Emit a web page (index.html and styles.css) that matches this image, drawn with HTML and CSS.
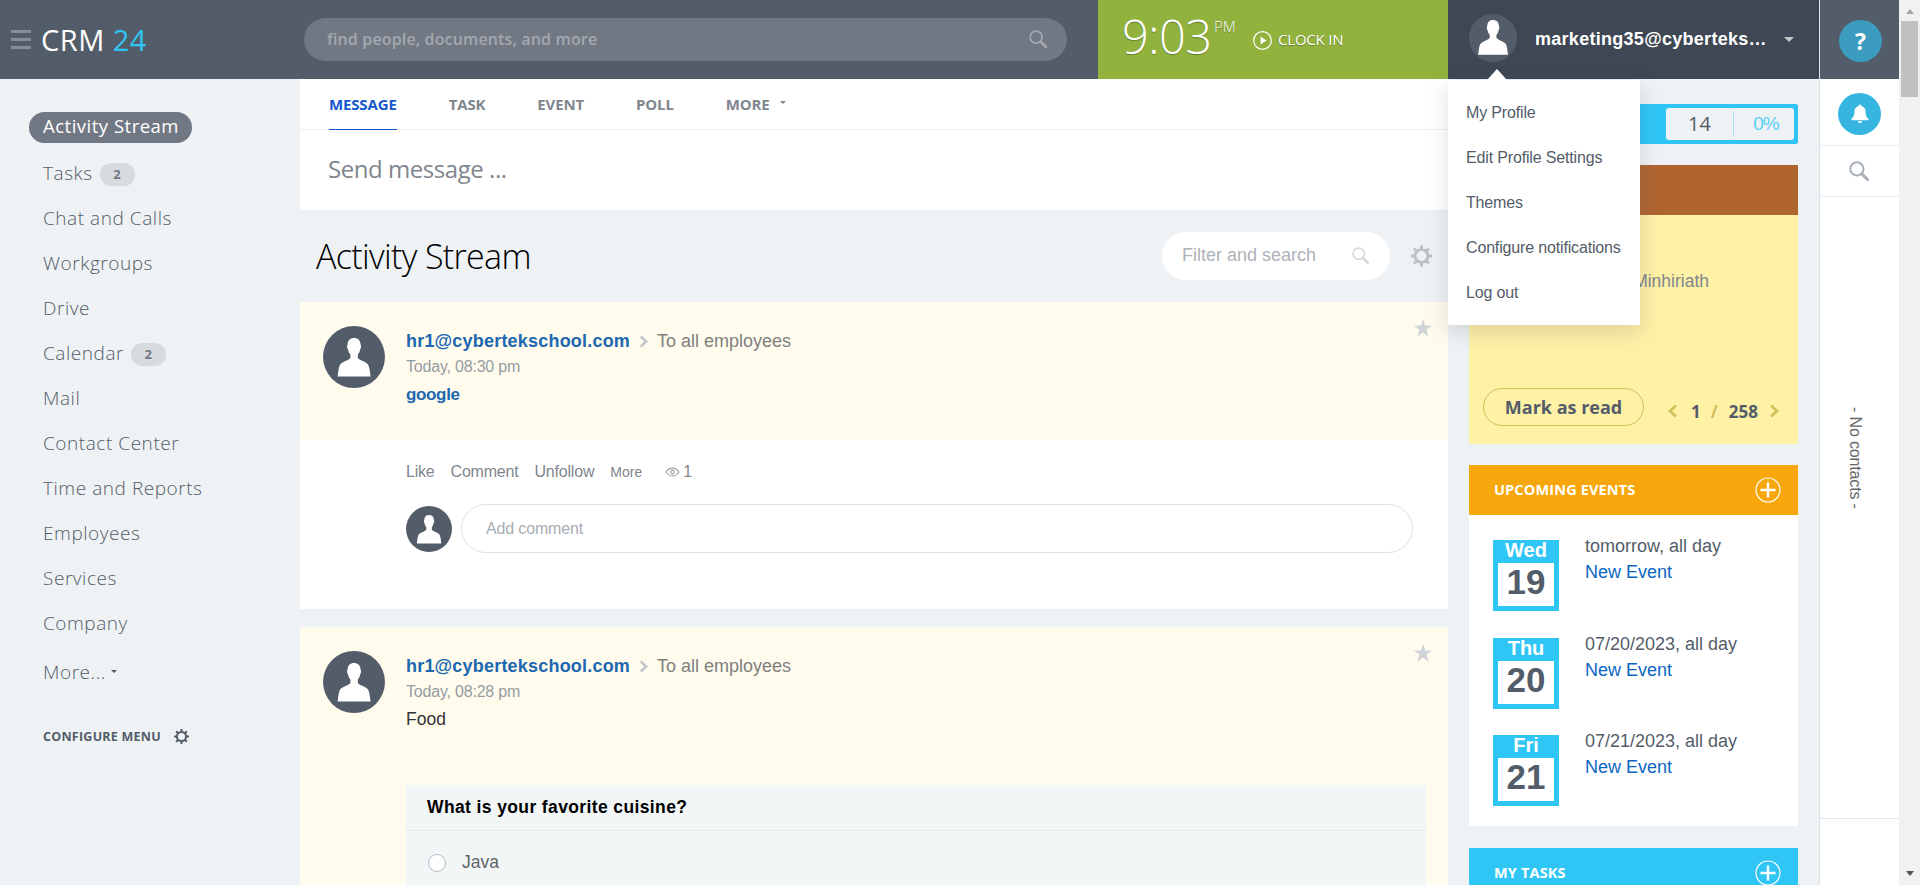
FILE: index.html
```html
<!DOCTYPE html>
<html lang="en">
<head>
<meta charset="utf-8">
<title>CRM 24</title>
<link rel="stylesheet" href="styles.css">
</head>
<body>
<svg class="defs" width="0" height="0">
  <symbol id="person" viewBox="0 0 62 62"><path d="M31 12c-4 0-6.300 2.500-6.300 6.500-1 .5-.6 4 .3 4.800.5 2.700 1.300 4 2.400 5.200v3.200c-1 2.800-8.400 3.500-10.600 7.200-1.200 2.600-1.600 7-2.200 11.600h33c-.6-4.600-1-9-2.300-11.600-2-3.700-9.500-4.400-10.500-7.200v-3.200c1.100-1.200 1.900-2.500 2.400-5.200.9-.8 1.200-4.300.3-4.800C37.500 14.500 35 12 31 12z" fill="#fff"/></symbol>
  <symbol id="lens" viewBox="0 0 20 20"><circle cx="7.500" cy="7.500" r="6.300" fill="none" stroke="currentColor" stroke-width="1.900"/><path d="M12 12l6.500 6.500" stroke="currentColor" stroke-width="2.800"/></symbol>
  <symbol id="gear" viewBox="0 0 22 22"><circle cx="11" cy="11" r="6.700" fill="none" stroke="currentColor" stroke-width="3"/><path d="M11 0v4M11 18v4M0 11h4M18 11h4M3.200 3.200l3 3M15.800 15.800l3 3M3.200 18.800l3-3M15.800 6.200l3-3" stroke="currentColor" stroke-width="3"/></symbol>
  <symbol id="star" viewBox="0 0 18 18"><path d="M9 0l2.200 6.600H18l-5.500 4.200 2.100 6.700L9 13.400l-5.600 4.100 2.100-6.700L0 6.600h6.800z" fill="currentColor"/></symbol>
  <symbol id="plus" viewBox="0 0 26 26"><circle cx="13" cy="13" r="12" fill="none" stroke="#fff" stroke-width="1.200"/><path d="M13 5.500v15M5.500 13h15" stroke="#fff" stroke-width="2.400"/></symbol>
  <symbol id="chev" viewBox="0 0 10 14"><path d="M2 1.500L8 7l-6 5.500" fill="none" stroke="currentColor" stroke-width="2.800"/></symbol>
</svg>
<div class="page">
  <div class="app">
    <header class="header">
      <div class="brand">
        <div class="burger"><i></i><i></i><i></i></div>
        <div class="logo">CRM <b>24</b></div>
      </div>
      <div class="search"><span>find people, documents, and more</span><svg class="search-icon"><use href="#lens"/></svg></div>
      <div class="clock">
        <span class="time">9:03</span><span class="pm">PM</span>
        <svg class="play" viewBox="0 0 19 19"><circle cx="9.500" cy="9.500" r="8.800" fill="none" stroke="#fff" stroke-width="1.200"/><path d="M7.500 5.500v8l6-4z" fill="#fff"/></svg>
        <span class="clock-in">CLOCK IN</span>
      </div>
      <div class="user">
        <svg class="user-pic" viewBox="0 0 62 62"><use href="#person" width="62" height="62" transform="translate(-5.300 -6.300) scale(1.170)"/></svg>
        <span class="user-name">marketing35@cyberteks…</span>
        <i class="caret"></i>
        <div class="menu">
          <a>My Profile</a><a>Edit Profile Settings</a><a>Themes</a><a>Configure notifications</a><a>Log out</a>
        </div>
      </div>
    </header>
    <div class="body">
      <nav class="nav">
        <a class="item current"><span>Activity Stream</span></a>
        <a class="item">Tasks<em>2</em></a>
        <a class="item">Chat and Calls</a>
        <a class="item">Workgroups</a>
        <a class="item">Drive</a>
        <a class="item">Calendar<em>2</em></a>
        <a class="item">Mail</a>
        <a class="item">Contact Center</a>
        <a class="item">Time and Reports</a>
        <a class="item">Employees</a>
        <a class="item">Services</a>
        <a class="item">Company</a>
        <a class="item more">More...<i class="tiny-caret"></i></a>
        <a class="configure">CONFIGURE MENU<svg><use href="#gear"/></svg></a>
      </nav>
      <main class="main">
        <section class="composer">
          <div class="tabs"><a class="active">MESSAGE</a><a>TASK</a><a>EVENT</a><a>POLL</a><a>MORE<i class="tiny-caret"></i></a></div>
          <div class="send">Send message ...</div>
        </section>
        <div class="title-row">
          <h1>Activity Stream</h1>
          <div class="filter"><span>Filter and search</span><svg><use href="#lens"/></svg></div>
          <svg class="title-gear"><use href="#gear"/></svg>
        </div>
        <article class="post first">
          <div class="post-head">
            <svg class="avatar"><use href="#person"/></svg>
            <div class="post-info">
              <div class="who"><b>hr1@cybertekschool.com</b><svg><use href="#chev"/></svg><span>To all employees</span></div>
              <div class="when">Today, 08:30 pm</div>
              <div class="text link">google</div>
            </div>
            <svg class="star"><use href="#star"/></svg>
          </div>
          <div class="actions"><a>Like</a><a>Comment</a><a>Unfollow</a><a class="small">More</a><span class="views"><svg viewBox="0 0 16 10"><path d="M1 5c3.500-5.500 10.500-5.500 14 0-3.500 5.500-10.500 5.500-14 0z" fill="none" stroke="#a0a5ac" stroke-width="1.200"/><circle cx="8" cy="5" r="2" fill="none" stroke="#a0a5ac" stroke-width="1.200"/></svg>1</span></div>
          <div class="comment"><svg class="avatar mini"><use href="#person"/></svg><div class="input">Add comment</div></div>
        </article>
        <article class="post second">
          <div class="post-head">
            <svg class="avatar"><use href="#person"/></svg>
            <div class="post-info">
              <div class="who"><b>hr1@cybertekschool.com</b><svg><use href="#chev"/></svg><span>To all employees</span></div>
              <div class="when">Today, 08:28 pm</div>
              <div class="text">Food</div>
            </div>
            <svg class="star"><use href="#star"/></svg>
          </div>
          <div class="poll">
            <div class="question">What is your favorite cuisine?</div>
            <div class="option"><i></i>Java</div>
          </div>
        </article>
      </main>
      <aside class="side">
        <div class="pulse"><div class="pulse-box"><span>14</span><span class="pct">0%</span></div></div>
        <section class="notice">
          <div class="notice-head"></div>
          <div class="notice-body">
            <div class="notice-text">Minhiriath</div>
            <div class="notice-foot"><a class="read">Mark as read</a><div class="pager"><svg class="flip"><use href="#chev"/></svg><b>1</b><em>/</em><b>258</b><svg><use href="#chev"/></svg></div></div>
          </div>
        </section>
        <section class="events">
          <div class="widget-head">UPCOMING EVENTS<svg><use href="#plus"/></svg></div>
          <div class="events-body">
            <div class="event"><div class="date"><b>Wed</b><span>19</span></div><div class="what"><span>tomorrow, all day</span><a>New Event</a></div></div>
            <div class="event"><div class="date"><b>Thu</b><span>20</span></div><div class="what"><span>07/20/2023, all day</span><a>New Event</a></div></div>
            <div class="event"><div class="date"><b>Fri</b><span>21</span></div><div class="what"><span>07/21/2023, all day</span><a>New Event</a></div></div>
          </div>
        </section>
        <section class="tasks"><div class="widget-head">MY TASKS<svg><use href="#plus"/></svg></div></section>
      </aside>
    </div>
  </div>
  <aside class="rail">
    <div class="help"><span>?</span></div>
    <div class="bell"><span><svg viewBox="0 0 20 22"><path d="M10 0c-1.200 0-1.800.8-1.800 1.700C5 2.500 3.800 5 3.800 8c0 4.500-1.300 6-3.300 8v1.500h19V16c-2-2-3.300-3.500-3.300-8 0-3-1.200-5.500-4.400-6.300C11.800.8 11.200 0 10 0zM7.500 18.500c.3 1.500 1.300 2 2.500 2s2.200-.5 2.500-2z" fill="#fff"/></svg></span></div>
    <div class="find"><svg><use href="#lens"/></svg></div>
    <div class="contacts"><span>- No contacts -</span></div>
    <div class="rail-end"></div>
  </aside>
  <div class="scrollbar"><i class="up"></i><i class="thumb"></i><i class="down"></i></div>
</div>
</body>
</html>
```
FILE: styles.css
```css
* { box-sizing: border-box; }
body { margin: 0; font-family: "Liberation Sans", Arial, sans-serif; background: #eef2f4; overflow: hidden; }
em, i { font-style: normal; }
svg { display: block; flex: none; }
.defs { position: absolute; }
.page { display: flex; width: 1920px; height: 885px; overflow: hidden; }
.app { width: 1819px; display: flex; flex-direction: column; }

/* Header */
.header { height: 79px; flex: none; display: flex; background: #535c69; }
.brand { width: 304px; display: flex; align-items: center; padding-left: 11px; }
.burger { width: 20px; display: flex; flex-direction: column; gap: 5px; margin-right: 10px; }
.burger i { height: 3px; background: #868d95; }
.logo { font: 500 29px/38px "Open Sans", sans-serif; color: #fff; padding-top: 1px; letter-spacing: .5px; }
.logo b { font-weight: 500; color: #2fc6f6; }
.search { width: 763px; height: 43px; margin: 18px 31px 0 0; border-radius: 22px; background: #717884; display: flex; justify-content: space-between; align-items: center; padding: 0 19px 0 23px; color: #a3a8ae; font: 600 16px/20px "Open Sans", sans-serif; letter-spacing: .15px; }
.search span { padding-bottom: 2px; }
.search-icon { width: 19px; height: 19px; }
.clock { width: 350px; background: #91b33d; color: #fff; display: flex; align-items: flex-start; padding-left: 24px; font-family: "Open Sans", sans-serif; text-shadow: 0 1px 1px rgba(0,0,0,.3); }
.time { font-size: 47px; line-height: 60px; font-weight: 300; padding-top: 6px; width: 92px; letter-spacing: -.500px; }
.pm { font-size: 15px; line-height: 20px; font-weight: 300; margin-top: 16px; width: 38px; }
.play { width: 19px; height: 19px; margin: 31px 6px 0 1px; }
.clock-in { font-size: 15px; line-height: 20px; margin-top: 29px; letter-spacing: -.2px; }
.user { width: 371px; background: #3e4753; position: relative; display: flex; align-items: center; padding-left: 21px; }
.user-pic { width: 48px; height: 48px; border-radius: 50%; background: #535c69; margin-bottom: 4px; }
.user-name { color: #fff; font-weight: 700; font-size: 18px; letter-spacing: .28px; margin-left: 18px; width: 235px; white-space: nowrap; }
.caret { border: 5px solid transparent; border-top-color: #c3c7cb; border-bottom: 0; margin-left: 14px; }
.menu { position: absolute; left: 0; top: 80px; width: 192px; height: 245px; padding: 10px 18px; background: #fff; box-shadow: 0 7px 21px rgba(83,92,105,.2); z-index: 5; }
.menu::before { content: ""; position: absolute; left: 39px; top: -11px; border: 10px solid transparent; border-bottom: 11px solid #fff; border-top: 0; }
.menu a { display: block; height: 45px; line-height: 45px; font-size: 16px; letter-spacing: -.16px; color: #535c69; white-space: nowrap; }

/* Left navigation */
.body { flex: 1; display: flex; min-height: 0; }
.nav { width: 300px; padding: 26px 0 0 29px; font-family: "Open Sans", sans-serif; }
.item { display: flex; align-items: center; height: 45px; padding-left: 14px; font-size: 19px; font-weight: 300; letter-spacing: .55px; color: #535c69; }
.item.current { padding-left: 0; height: 45px; }
.item.current span { height: 31px; line-height: 27px; padding: 0 13px 0 14px; border-radius: 16px; background: #717884; color: #fff; font-weight: 400; font-size: 18.500px; letter-spacing: .5px; }
.item em { width: 35px; height: 23px; margin: 3px 0 0 7px; border-radius: 12px; background: #d6dbdf; font: 700 13px/22px "Open Sans", sans-serif; text-align: center; color: #717884; }
.item.more { margin-top: 4px; }
.tiny-caret { border: 3px solid transparent; border-top-color: currentColor; border-bottom: 0; margin-left: 5px; }
.configure { display: flex; align-items: center; padding-left: 14px; margin-top: 34px; font-weight: 700; font-size: 12.500px; letter-spacing: .25px; color: #535c69; }
.configure svg { width: 15px; height: 15px; margin-left: 13px; }

/* Stream */
.main { width: 1148px; display: flex; flex-direction: column; }
.composer { height: 131px; flex: none; background: #fff; }
.tabs { height: 51px; border-bottom: 1px solid #edeef0; display: flex; padding-left: 29px; gap: 52px; font: 700 15px/50px "Open Sans", sans-serif; color: #80868e; }
.tabs a { display: flex; align-items: center; height: 51px; padding-bottom: 2px; letter-spacing: -.15px; }
.tabs .active { color: #1458ce; border-bottom: 1px solid #1458ce; padding-bottom: 1px; }
.tabs .tiny-caret { margin: -3px 0 0 10px; }
.send { padding: 22px 28px; font: 24px/34px "Open Sans", sans-serif; letter-spacing: -.45px; color: #80868e; }
.title-row { height: 92px; flex: none; display: flex; align-items: center; padding: 0 16px; }
h1 { flex: 1; margin: 0; font: 300 34px/44px "Open Sans", sans-serif; letter-spacing: -.65px; color: #000; }
.filter { width: 228px; height: 48px; border-radius: 24px; background: #fff; color: #adb2b7; font-weight: 400; font-size: 18px; display: flex; align-items: center; justify-content: space-between; padding: 0 20px; margin: 0 21px 0 0; }
.filter span { padding-bottom: 2px; }
.filter svg { width: 18px; height: 18px; color: #d5d7db; }
.title-gear { width: 21px; height: 22px; color: #bcc0c8; }
.post { background: #fff; flex: none; }
.first { height: 307px; margin-bottom: 18px; }
.second { height: 300px; background: #fffcee; }
.post-head { height: 138px; background: #fffcee; display: flex; padding: 24px 16px 0 23px; }
.avatar { width: 62px; height: 62px; border-radius: 50%; background: #535c69; }
.avatar.mini { width: 46px; height: 46px; }
.post-info { flex: 1; padding: 4px 0 0 21px; }
.who { display: flex; align-items: center; height: 22px; font-size: 18px; color: #80807f; }
.who b { color: #2067b0; letter-spacing: .2px; }
.who svg { width: 9px; height: 13px; margin: 0 9px 0 9px; color: #c4c5c8; }
.when { font-size: 16px; line-height: 20px; margin-top: 5px; letter-spacing: -.2px; color: #959ba2; }
.text { font-size: 17.500px; line-height: 22px; margin-top: 6px; color: #333; }
.link { color: #2067b0; font-weight: 700; font-size: 17px; letter-spacing: -.35px; margin-top: 7px; }
.star { width: 18px; height: 18px; margin-top: -7px; color: #d0d3d8; }
.actions { display: flex; align-items: center; height: 20px; margin: 22px 0 0 106px; gap: 16px; font-size: 16px; letter-spacing: -.2px; color: #80868e; }
.actions .small { font-size: 14px; letter-spacing: 0; }
.views { display: flex; align-items: center; gap: 3px; margin-left: 7px; }
.views svg { width: 15px; height: 10px; }
.comment { display: flex; gap: 9px; align-items: center; margin: 22px 35px 0 106px; }
.input { flex: 1; height: 49px; border: 1px solid #dfe0e3; border-radius: 25px; line-height: 47px; padding-left: 24px; font-size: 16px; letter-spacing: -.15px; color: #a8adb4; }
.poll { margin: 20px 22px 0 106px; height: 150px; background: #f3f6f7; }
.question { height: 46px; line-height: 45px; padding-left: 21px; border-bottom: 1px solid #e4e9eb; font-weight: 700; font-size: 17.500px; letter-spacing: .38px; color: #000; }
.option { display: flex; align-items: center; height: 63px; padding-left: 22px; font-size: 17.500px; color: #606468; }
.option i { width: 18px; height: 18px; border: 1px solid #b4bbc4; border-radius: 50%; background: #fff; margin-right: 16px; }

/* Widgets */
.side { width: 371px; padding: 25px 21px 0; display: flex; flex-direction: column; }
.pulse { height: 40px; flex: none; background: #2fc6f6; border-radius: 2px; padding: 4px; display: flex; justify-content: flex-end; margin-bottom: 21px; }
.pulse-box { width: 128px; height: 32px; border-radius: 3px; background: #eef2f4; display: flex; align-items: center; font: 20px/26px "Open Sans", sans-serif; color: #535c69; }
.pulse-box span { width: 67px; text-align: center; }
.pulse-box .pct { width: 61px; padding-left: 4px; border-left: 1px solid #a8dff0; color: #55d0f5; font-family: "Liberation Sans", sans-serif; font-size: 19px; letter-spacing: -1px; }
.notice { height: 279px; flex: none; margin-bottom: 21px; background: #fff1a6; }
.notice-head { height: 50px; background: #b06530; }
.notice-body { height: 229px; display: flex; flex-direction: column; justify-content: space-between; padding: 55px 14px 18px; }
.notice-text { width: 226px; text-align: right; font-size: 17.500px; line-height: 22px; color: #80868e; white-space: nowrap; }
.notice-foot { display: flex; justify-content: space-between; align-items: flex-start; font-family: "Open Sans", sans-serif; color: #535c69; }
.read { width: 161px; height: 38px; border: 1px solid #d1c15b; border-radius: 19px; text-align: center; font-weight: 700; font-size: 18px; line-height: 36px; }
.pager { display: flex; align-items: center; height: 24px; margin: 11px 5px 0 0; font-size: 17px; gap: 11px; }
.pager svg { width: 10px; height: 14px; color: #d1c15b; }
.pager em { color: #d1c15b; font-weight: 700; }
.pager .flip { margin-right: 2px; }
.pager em { margin-left: -1px; }
.flip { transform: scaleX(-1); }
.widget-head { height: 50px; display: flex; align-items: center; justify-content: space-between; padding: 0 17px 0 25px; color: #fff; font: 700 14.500px/20px "Open Sans", sans-serif; letter-spacing: .15px; }
.widget-head svg { width: 26px; height: 26px; }
.events { height: 361px; flex: none; background: #fff; margin-bottom: 22px; }
.events .widget-head { background: #f7a70b; }
.events-body { padding: 25px 24px; display: flex; flex-direction: column; gap: 26.500px; }
.event { display: flex; height: 71px; }
.date { width: 66px; background: #2fc6f6; padding: 0 5px 5px; text-align: center; color: #fff; }
.date b { display: block; height: 23px; font-size: 20px; line-height: 20px; }
.date span { display: block; height: 43px; background: #fff; color: #535c69; font-weight: 700; font-size: 35px; line-height: 38px; }
.what { margin-left: 26px; font-size: 18px; color: #535c69; margin-top: -7px; }
.what span, .what a { display: block; line-height: 26px; }
.what a { color: #0b66c3; }
.tasks .widget-head { background: #2fc6f6; }

/* Right rail and scrollbar */
.rail { width: 80px; border-left: 1px solid #dce3e7; background: #fff; display: flex; flex-direction: column; }
.help { height: 79px; background: #535c69; display: flex; align-items: center; padding: 2px 0 0 19px; }
.help span, .bell span { width: 43px; height: 42px; border-radius: 50%; background: #3b9cc0; color: #fff; display: flex; align-items: center; justify-content: center; font: 700 23px/40px "Open Sans", sans-serif; }
.bell { height: 67px; border-bottom: 1px solid #e9edf0; padding: 14px 0 0 18px; }
.bell span { background: #35b5df; }
.bell svg { width: 18px; height: 21px; }
.find { height: 51px; border-bottom: 1px solid #e9edf0; padding: 15px 0 0 29px; color: #a9b0b8; }
.find svg { width: 21px; height: 21px; }
.contacts { flex: 1; display: flex; padding: 210px 0 0 25px; }
.contacts span { writing-mode: vertical-rl; font-size: 16px; line-height: 20px; letter-spacing: -.15px; color: #666; }
.rail-end { height: 67px; border-top: 1px solid #e4e9ec; }
.scrollbar { width: 21px; background: #f1f1f1; display: flex; flex-direction: column; align-items: center; padding: 9px 0 9px; }
.up { border: 4.500px solid transparent; border-bottom: 5px solid #a3a3a3; border-top: 0; }
.thumb { width: 17px; height: 76px; background: #c1c1c1; margin-top: 7px; }
.down { border: 4.500px solid transparent; border-top: 5px solid #505050; border-bottom: 0; margin-top: auto; }
```
